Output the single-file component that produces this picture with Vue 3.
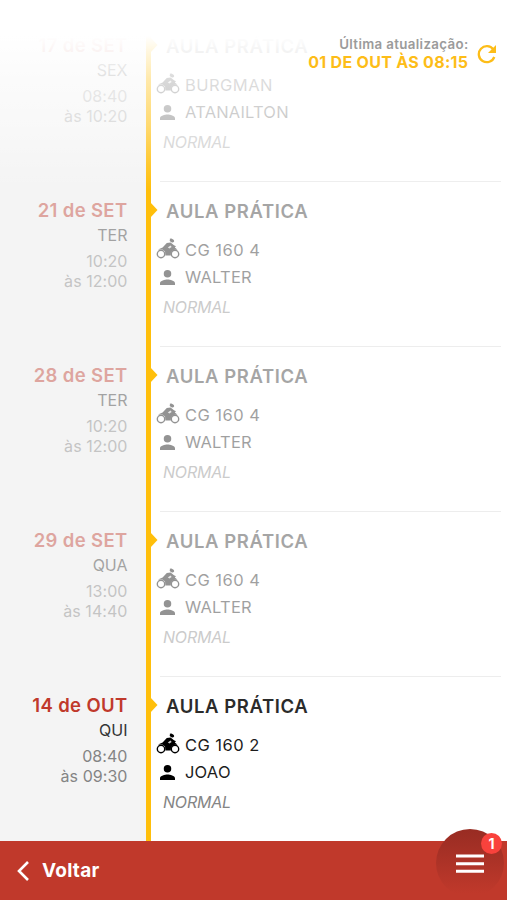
<script setup>
const lessons = [
  { date: '17 de SET', day: 'SEX', start: '08:40', end: '10:20', vehicle: 'BURGMAN', teacher: 'ATANAILTON', past: true },
  { date: '21 de SET', day: 'TER', start: '10:20', end: '12:00', vehicle: 'CG 160 4', teacher: 'WALTER', past: true },
  { date: '28 de SET', day: 'TER', start: '10:20', end: '12:00', vehicle: 'CG 160 4', teacher: 'WALTER', past: true },
  { date: '29 de SET', day: 'QUA', start: '13:00', end: '14:40', vehicle: 'CG 160 4', teacher: 'WALTER', past: true },
  { date: '14 de OUT', day: 'QUI', start: '08:40', end: '09:30', vehicle: 'CG 160 2', teacher: 'JOAO', past: false },
]
</script>

<template>
  <div class="screen">
    <main class="timeline">
      <section v-for="l in lessons" :key="l.date" class="lesson" :class="{ past: l.past }">
        <div class="when">
          <div class="date">{{ l.date }}</div>
          <div class="day">{{ l.day }}</div>
          <div class="time">{{ l.start }}</div>
          <div class="time">às {{ l.end }}</div>
        </div>
        <div class="rail">
          <svg class="arrow" viewBox="0 0 8 16"><path d="M0 0L7.5 8L0 16Z" /></svg>
        </div>
        <div class="info">
          <h2>AULA PRÁTICA</h2>
          <div class="line">
            <svg class="moto" viewBox="0 0 24 22">
              <circle cx="5" cy="16" r="3.700" class="wheel" />
              <circle cx="19" cy="16" r="3.700" class="wheel" />
              <path d="M2 11.400L6.600 9.600L10.800 5L14.600 4.600L18 7.200L20 8.200L18.800 9.400L21.400 11.600L17.600 12L15 14.600L14.800 17.400H9.400L9 13.600L6.400 11.600Z" />
              <path d="M11.800 9.400L14.600 7.600L15.600 9L13.400 10.600Z" class="gap" />
              <ellipse cx="15.900" cy="2.600" rx="2.300" ry="1.700" transform="rotate(30 15.9 2.6)" />
              <path d="M13.800 .4L15.200 1L14.400 2Z" />
            </svg>
            <span>{{ l.vehicle }}</span>
          </div>
          <div class="line">
            <svg class="person" viewBox="4 4 16 16"><path d="M12 12a4 4 0 1 0 0-8 4 4 0 0 0 0 8zm0 2c-2.670 0-8 1.340-8 4v2h16v-2c0-2.660-5.330-4-8-4z" /></svg>
            <span>{{ l.teacher }}</span>
          </div>
          <div class="kind">NORMAL</div>
        </div>
      </section>
    </main>

    <header class="top">
      <div class="update">
        <div class="label">Última atualização:</div>
        <div class="stamp">01 DE OUT ÀS 08:15</div>
      </div>
      <svg class="refresh" viewBox="0 0 20 20">
        <path d="M16.300 5.500A8 8 0 1 0 17.300 13" />
        <path d="M19 1V9H11Z" class="tip" />
      </svg>
    </header>

    <footer class="bar">
      <svg class="back" viewBox="0 0 12 20"><path d="M11 1L2 10L11 19" /></svg>
      <span>Voltar</span>
    </footer>
    <button class="menu" aria-label="Menu">
      <svg viewBox="0 0 28 20"><path d="M0 2H28M0 9.700H28M0 17.300H28" /></svg>
      <span class="badge">1</span>
    </button>
  </div>
</template>

<style>
body { margin: 0; background: #fff; }
</style>

<style scoped>
.screen { position: relative; box-sizing: border-box; width: 507px; height: 900px; overflow: hidden; padding-top: 17px; background: #fff; font-family: Inter, "Liberation Sans", sans-serif; display: flex; flex-direction: column; }
.timeline { flex: none; height: 824px; overflow: hidden; }
.lesson { display: grid; grid-template-columns: 146px 5px 1fr; height: 165px; }
.when { background: #f4f4f4; padding: 16px 18.500px 0 0; text-align: right; white-space: nowrap; }
.date { font-size: 18.500px; line-height: 24px; font-weight: 600; color: #c0392b; letter-spacing: .35px; }
.day { font-size: 16px; line-height: 20px; margin-top: 3px; color: #333; }
.time { font-size: 16px; line-height: 20px; color: #848484; letter-spacing: .05px; }
.day + .time { margin-top: 6px; }
.rail { position: relative; background: #ffbf0b; }
.arrow { position: absolute; left: 4px; top: 20px; width: 8px; height: 16px; fill: #ffbf0b; }
.info { margin-left: 9px; margin-right: 6px; padding-top: 17px; border-bottom: 1px solid #ededed; }
h2 { margin: 0 0 0 6px; font-size: 18.500px; line-height: 24px; font-weight: 600; color: #2b2b2b; letter-spacing: .6px; }
.line { display: flex; align-items: center; height: 27px; font-size: 16.500px; color: #1c1c1c; letter-spacing: .45px; }
h2 + .line { margin-top: 14px; }
.line ~ .line { letter-spacing: .2px; }
.line svg { flex: none; fill: #000; }
.line span { line-height: 27px; }
.moto { width: 24px; height: 22px; margin-left: -4px; margin-right: 5px; margin-top: -3px; }
.wheel { fill: none; stroke: #000; stroke-width: 1.4; }
.moto .gap { fill: #fff; opacity: .8; }
.person { width: 15px; height: 15px; margin: 0 10px 0 0; }
.kind { margin: 6px 0 0 3px; font-size: 16px; line-height: 20px; font-style: italic; color: #858585; letter-spacing: -.2px; }
.past .date, .past .day, .past .time, .past h2, .past .line, .past .kind { opacity: .42; }
.top { position: absolute; inset: 0 0 auto 0; height: 190px; box-sizing: border-box; padding: 36px 10px 0 0; display: flex; justify-content: flex-end; align-items: flex-start; background: linear-gradient(#fff 0, #fff 36px, rgba(255,255,255,.88) 50px, rgba(255,255,255,.65) 80px, rgba(255,255,255,.42) 125px, rgba(255,255,255,.15) 165px, rgba(255,255,255,0) 190px); }
.update { text-align: right; white-space: nowrap; }
.label { font-size: 13.300px; line-height: 17px; font-weight: 600; color: #9b9b9b; letter-spacing: .35px; margin-right: -.5px; }
.stamp { font-size: 16px; line-height: 19px; font-weight: 700; color: #fdbd18; letter-spacing: .3px; margin-right: -.3px; }
.refresh { width: 20px; height: 20px; margin: 8px 0 0 9px; fill: none; stroke: #fdbd18; stroke-width: 2.300; }
.refresh .tip { fill: #fdbd18; stroke: none; }
.bar { height: 59px; flex: none; box-sizing: border-box; padding: 0 0 0 17px; display: flex; align-items: center; background: #c0392b; color: #fff; font-size: 19px; font-weight: 700; letter-spacing: .25px; }
.back { width: 12px; height: 20px; margin-right: 13px; fill: none; stroke: #fff; stroke-width: 2.600; }
.menu { position: absolute; left: 436px; top: 829px; width: 68px; height: 68px; padding: 0; border: 0; border-radius: 50%; background: linear-gradient(#982c23, #c0392b 95%); }
.menu svg { position: absolute; left: 20px; top: 25px; width: 28px; height: 20px; stroke: #fff; stroke-width: 3; }
.badge { position: absolute; left: 45px; top: 4px; width: 21px; height: 21px; border-radius: 50%; background: #f9423c; color: #fff; font: 700 14px/21px Inter, sans-serif; text-align: center; }
</style>
